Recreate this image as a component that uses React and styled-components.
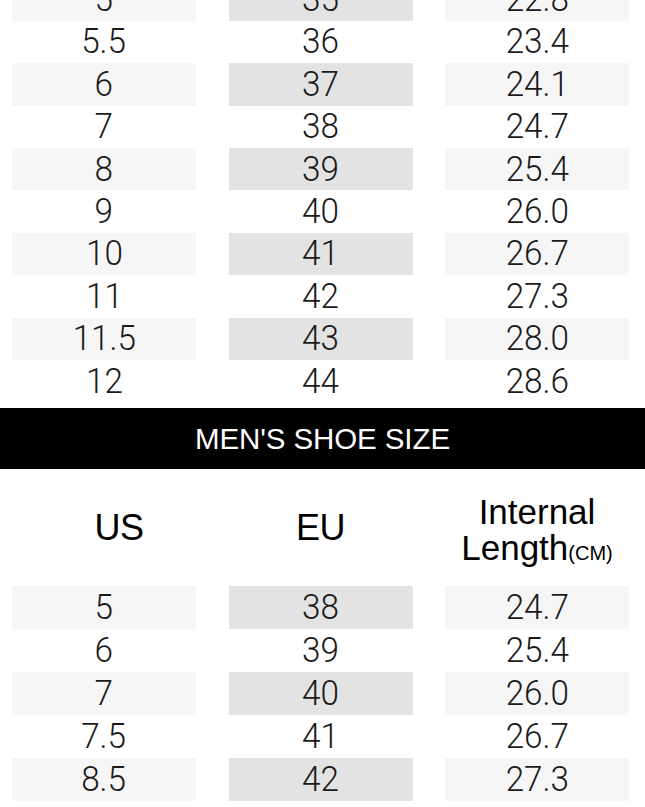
import React from "react";
import styled, { createGlobalStyle } from "styled-components";

const GlobalStyle = createGlobalStyle`
  html, body { margin: 0; padding: 0; background: #ffffff; }
  body { font-family: "Liberation Sans", Arial, sans-serif; }
`;

const Page = styled.div`
  width: 645px;
  margin-top: -21.6px;
  display: flex;
  flex-direction: column;
`;

const Table = styled.div`
  display: flex;
  flex-direction: column;
`;

const Row = styled.div`
  display: grid;
  grid-template-columns: 184px 184px 184px;
  column-gap: 32.5px;
  padding-left: 12px;
  height: ${(p) => p.$h}px;
`;

const Cell = styled.div`
  display: flex;
  align-items: center;
  justify-content: center;
  background: ${(p) =>
    p.$shaded ? (p.$col === 1 ? "#e3e3e3" : "#f6f6f6") : "transparent"};
`;

const Num = styled.span`
  display: inline-block;
  font-family: Roboto, "Liberation Sans", sans-serif;
  font-weight: 300;
  font-size: 35px;
  color: #1a1a1a;
  line-height: 1;
  transform: scaleX(0.95);
`;

const Band = styled.div`
  margin-top: 6px;
  height: 61px;
  background: #000;
  color: #fff;
  display: flex;
  align-items: center;
  justify-content: center;
  font-family: "Liberation Sans", Arial, sans-serif;
  font-size: 29.5px;
  letter-spacing: -0.1px;
`;

const HeadRow = styled.div`
  display: grid;
  grid-template-columns: 184px 184px 184px;
  column-gap: 32.5px;
  padding-left: 12px;
  height: 117px;
`;

const HeadCell = styled.div`
  display: flex;
  flex-direction: column;
  align-items: center;
  justify-content: center;
  padding-left: ${(p) => p.$shiftX || 0}px;
  padding-top: ${(p) => p.$shiftY || 0}px;
  font-family: "Liberation Sans", Arial, sans-serif;
  font-size: 36px;
  line-height: 36px;
  color: #000;
  letter-spacing: -0.5px;
`;

const HeadLine = styled.span`
  font-size: 35px;
  line-height: 36px;
  letter-spacing: 0;
  white-space: nowrap;
`;

const Unit = styled.span`
  font-size: 20px;
  letter-spacing: 0;
`;

const womens = [
  ["5", "35", "22.8"],
  ["5.5", "36", "23.4"],
  ["6", "37", "24.1"],
  ["7", "38", "24.7"],
  ["8", "39", "25.4"],
  ["9", "40", "26.0"],
  ["10", "41", "26.7"],
  ["11", "42", "27.3"],
  ["11.5", "43", "28.0"],
  ["12", "44", "28.6"],
];

const mens = [
  ["5", "38", "24.7"],
  ["6", "39", "25.4"],
  ["7", "40", "26.0"],
  ["7.5", "41", "26.7"],
  ["8.5", "42", "27.3"],
  ["9.5", "43", "28.0"],
];

function SizeRows({ data, height }) {
  return (
    <Table>
      {data.map((r, i) => (
        <Row key={i} $h={height}>
          {r.map((v, c) => (
            <Cell key={c} $col={c} $shaded={i % 2 === 0}>
              <Num>{v}</Num>
            </Cell>
          ))}
        </Row>
      ))}
    </Table>
  );
}

export default function App() {
  return (
    <>
      <GlobalStyle />
      <Page>
        <SizeRows data={womens} height={42.4} />
        <Band>MEN'S SHOE SIZE</Band>
        <HeadRow>
          <HeadCell $shiftX={30}>US</HeadCell>
          <HeadCell>EU</HeadCell>
          <HeadCell $shiftY={10}>
            <HeadLine>Internal</HeadLine>
            <HeadLine>
              Length<Unit>(CM)</Unit>
            </HeadLine>
          </HeadCell>
        </HeadRow>
        <SizeRows data={mens} height={43} />
      </Page>
    </>
  );
}
